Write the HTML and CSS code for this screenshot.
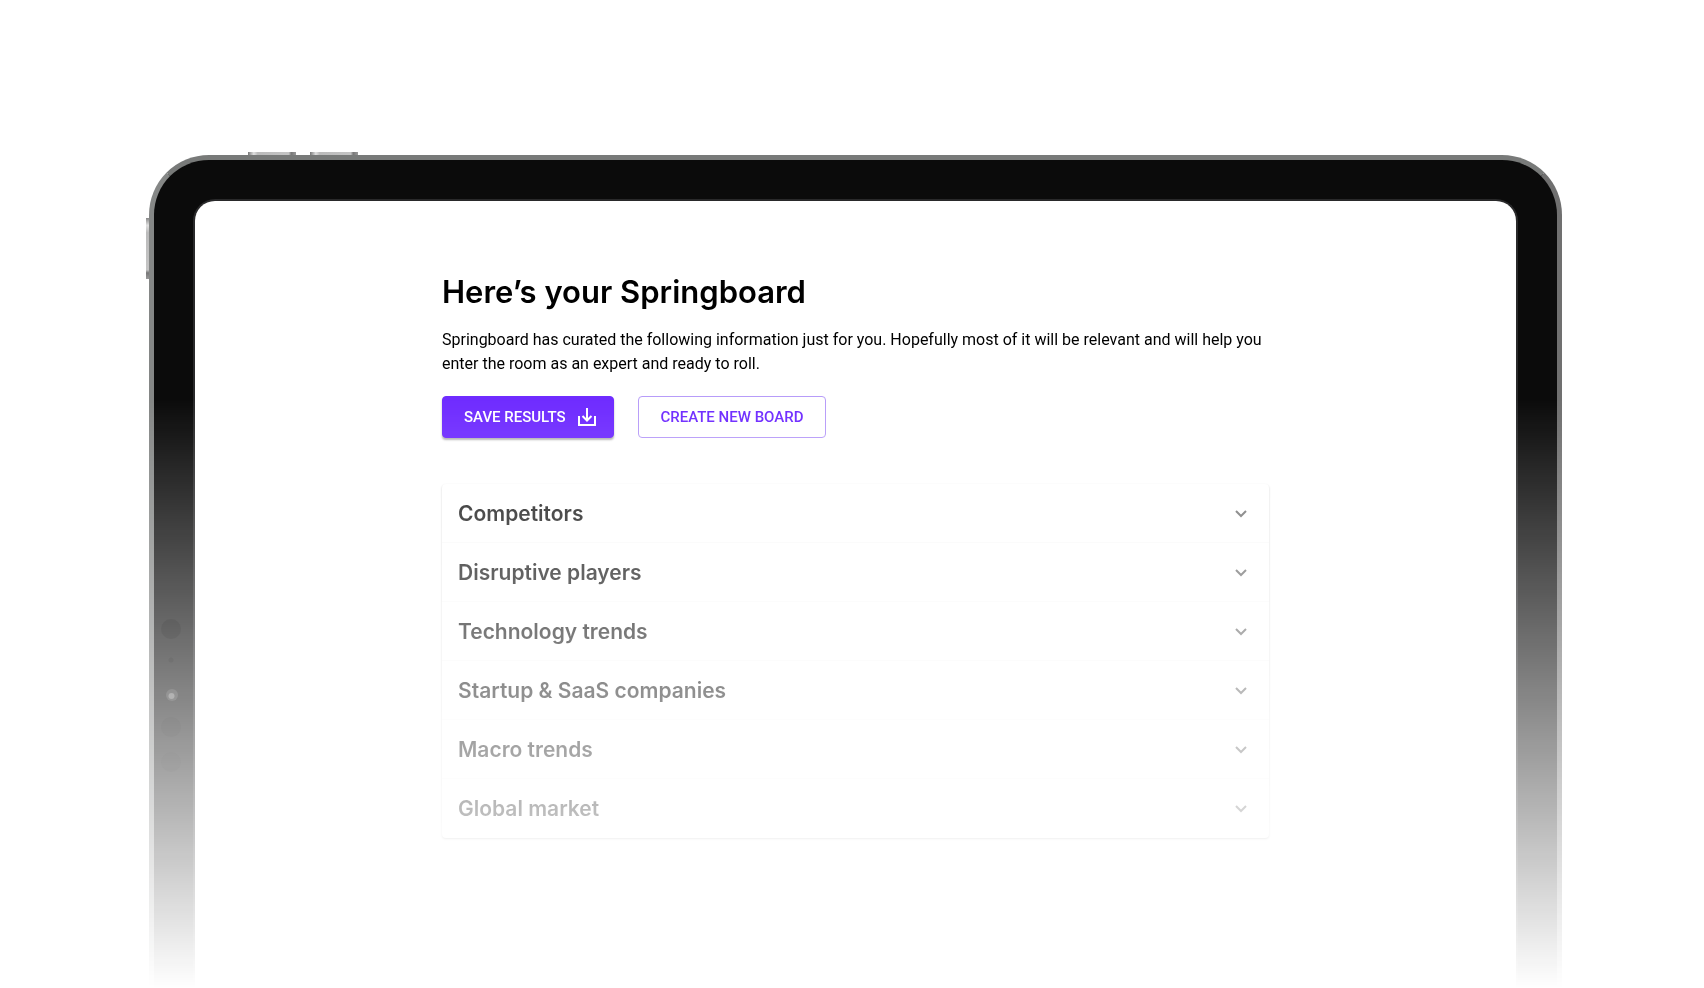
FILE: index.html
```html
<!DOCTYPE html>
<html lang="en">
<head>
<meta charset="utf-8">
<meta name="viewport" content="width=device-width, initial-scale=1">
<title>Springboard</title>
<link rel="stylesheet" href="styles.css">
</head>
<body>
<div class="stage">
  <div class="tablet">
    <span class="key key-up"></span>
    <span class="key key-down"></span>
    <span class="key key-power"></span>
    <svg class="sensors" width="20" height="154" viewBox="0 0 20 154" aria-hidden="true">
      <circle cx="10" cy="10" r="10" fill="#000"/>
      <circle cx="10" cy="41" r="2.5" fill="#000"/>
      <circle cx="11" cy="76" r="6" fill="#2a2a2a"/>
      <circle cx="10.500" cy="77" r="3" fill="#666"/>
      <circle cx="10" cy="108" r="10" fill="#040404"/>
      <circle cx="10" cy="143" r="10" fill="#040404"/>
    </svg>
    <main class="screen">
      <div class="content">
        <h1 class="title">Here’s your Springboard</h1>
        <p class="intro">Springboard has curated the following information just for you. Hopefully most of it will be relevant and will help you enter the room as an expert and ready to roll.</p>
        <div class="actions">
          <button class="btn btn-primary" type="button">SAVE RESULTS
            <svg width="18" height="18" viewBox="0 0 18 18" fill="none" stroke="currentColor" stroke-width="2" aria-hidden="true"><path d="M1 8v9h16V8M9 0v12M4.500 8 9 12.500 13.500 8"/></svg>
          </button>
          <button class="btn btn-outline" type="button">CREATE NEW BOARD</button>
        </div>
        <div class="accordion">
          <button class="row" type="button" aria-expanded="false">Competitors<svg class="chevron" viewBox="0 0 12 8" aria-hidden="true"><path d="M1 1l5 5 5-5"/></svg></button>
          <button class="row" type="button" aria-expanded="false">Disruptive players<svg class="chevron" viewBox="0 0 12 8" aria-hidden="true"><path d="M1 1l5 5 5-5"/></svg></button>
          <button class="row" type="button" aria-expanded="false">Technology trends<svg class="chevron" viewBox="0 0 12 8" aria-hidden="true"><path d="M1 1l5 5 5-5"/></svg></button>
          <button class="row" type="button" aria-expanded="false">Startup &amp; SaaS companies<svg class="chevron" viewBox="0 0 12 8" aria-hidden="true"><path d="M1 1l5 5 5-5"/></svg></button>
          <button class="row" type="button" aria-expanded="false">Macro trends<svg class="chevron" viewBox="0 0 12 8" aria-hidden="true"><path d="M1 1l5 5 5-5"/></svg></button>
          <button class="row" type="button" aria-expanded="false">Global market<svg class="chevron" viewBox="0 0 12 8" aria-hidden="true"><path d="M1 1l5 5 5-5"/></svg></button>
        </div>
      </div>
    </main>
  </div>
</div>
</body>
</html>
```
FILE: styles.css
```css
* {
  box-sizing: border-box;
}

body {
  margin: 0;
  background: #fff;
  color: #000;
  font-family: Roboto, "Liberation Sans", sans-serif;
}

/* The whole device dissolves into the page towards the bottom. */
.stage {
  display: flex;
  min-height: 100vh;
  padding: 155px 142px 0 149px;
  -webkit-mask-image: linear-gradient(#000 400px, transparent 100%);
  mask-image: linear-gradient(#000 400px, transparent 100%);
}

.tablet {
  position: relative;
  display: flex;
  flex: 1;
  padding: 39px 39px 0;
  border: 5px solid #787a79;
  border-right-color: #707070;
  border-left-color: #858786;
  border-bottom: 0;
  border-radius: 60px 60px 0 0;
  background: #0b0b0b;
}

.screen {
  flex: 1;
  padding: 71px 24px 80px;
  border: 2px solid #29292a;
  border-bottom: 0;
  border-radius: 22px 22px 0 0;
  background: #fff;
}

.key {
  position: absolute;
  top: -8px;
  width: 48px;
  height: 3px;
  background: linear-gradient(90deg, #777, #e0e0e0 12%, #bbb 20%, #c4c4c4 85%, #777 90%, #999);
}

.key-up {
  left: 94px;
}

.key-down {
  left: 156px;
}

.key-power {
  top: 58px;
  left: -8px;
  width: 3px;
  height: 61px;
  background: linear-gradient(#888, #e0e0e0 12%, #bbb 24%, #c4c4c4 85%, #777 90%, #999);
}

.sensors {
  position: absolute;
  top: 459px;
  left: 7px;
}

.content {
  max-width: 827px;
  margin: 0 auto;
}

.title {
  margin: 0 0 16px;
  font: 600 31px/40px Inter, "Liberation Sans", sans-serif;
}

.intro {
  margin: 0 0 20px;
  font-size: 16px;
  line-height: 24px;
}

.actions {
  display: flex;
  gap: 24px;
  margin-bottom: 46px;
}

.btn {
  display: flex;
  align-items: center;
  justify-content: center;
  gap: 12px;
  height: 42px;
  padding: 0 22px;
  border: 1px solid #b79cf9;
  border-radius: 4px;
  background: #fff;
  color: #6f2cff;
  font: 500 15px/24px Roboto, "Liberation Sans", sans-serif;
}

.btn-primary {
  padding: 0 17px 0 21px;
  border-color: #6f2cff;
  background: #6f2cff;
  color: #fff;
  box-shadow: 0 2px 2px rgba(0, 0, 0, 0.3);
}

.accordion {
  padding-bottom: 1px;
  border-radius: 4px;
  box-shadow: 0 1px 2px rgba(0, 0, 0, 0.24);
}

.row {
  display: flex;
  align-items: center;
  justify-content: space-between;
  width: 100%;
  padding: 15px 22px 14px 16px;
  border: 0;
  border-bottom: 1px solid #fafafa;
  background: none;
  color: rgba(0, 0, 0, 0.87);
  font: 600 21px/29px Inter, "Liberation Sans", sans-serif;
  text-align: left;
}

.row:last-child {
  border-bottom: 0;
}

.chevron {
  width: 12px;
  height: 8px;
  fill: none;
  stroke: rgba(0, 0, 0, 0.54);
  stroke-width: 2;
}
```
